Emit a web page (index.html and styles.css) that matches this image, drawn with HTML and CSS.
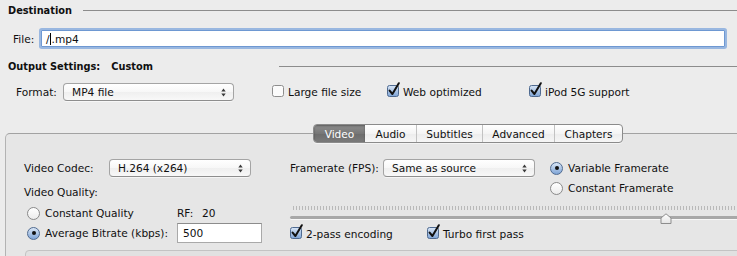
FILE: index.html
```html
<!DOCTYPE html>
<html>
<head>
<meta charset="utf-8">
<link rel="stylesheet" href="styles.css">
</head>
<body>
<div class="page">
  <div class="head-row dest-row">
    <span class="head">Destination</span>
    <span class="rule rule-dest"></span>
  </div>

  <div class="file-row">
    <span class="lbl file-lbl">File:</span>
    <div class="field focus"><span>/</span><span class="caret"></span><span>.mp4</span></div>
  </div>

  <div class="head-row out-row">
    <span class="head">Output Settings:</span>
    <span class="head custom">Custom</span>
    <span class="rule rule-out"></span>
  </div>

  <div class="format-row">
    <span class="lbl format-lbl">Format:</span>
    <div class="popup w-format"><span>MP4 file</span>
      <svg class="arrows" width="5" height="9" viewBox="0 0 5 9"><path d="M0.3 3.6 L2.5 0.6 L4.7 3.6 Z M0.3 5.4 L2.5 8.4 L4.7 5.4 Z" fill="#3a3a3a"/></svg>
    </div>
    <div class="check w-large">
      <svg class="cb" width="14" height="16" viewBox="0 0 14 16"><rect x="0.5" y="3.5" width="11" height="11" rx="2" class="cb-off"/></svg>
      <span>Large file size</span>
    </div>
    <div class="check w-web">
      <svg class="cb" width="14" height="16" viewBox="0 0 14 16"><defs><linearGradient id="g1" x1="0" y1="0" x2="0" y2="1"><stop offset="0" stop-color="#d9e6f6"/><stop offset="1" stop-color="#7ea4d6"/></linearGradient></defs><rect x="0.5" y="3.5" width="11" height="11" rx="2" fill="url(#g1)" stroke="#4f6a90"/><path d="M2.6 8.6 L5.4 12 L11.8 1.2" fill="none" stroke="#111" stroke-width="2" stroke-linecap="round" stroke-linejoin="round"/></svg>
      <span>Web optimized</span>
    </div>
    <div class="check">
      <svg class="cb" width="14" height="16" viewBox="0 0 14 16"><rect x="0.5" y="3.5" width="11" height="11" rx="2" fill="url(#g1)" stroke="#4f6a90"/><path d="M2.6 8.6 L5.4 12 L11.8 1.2" fill="none" stroke="#111" stroke-width="2" stroke-linecap="round" stroke-linejoin="round"/></svg>
      <span>iPod 5G support</span>
    </div>
  </div>

  <div class="tabbox">
    <div class="tabs">
      <span class="tab sel t-video">Video</span>
      <span class="tab t-audio">Audio</span>
      <span class="tab t-subs">Subtitles</span>
      <span class="tab t-adv">Advanced</span>
      <span class="tab t-chap">Chapters</span>
    </div>

    <div class="tab-content">
      <div class="col-left">
        <div class="row codec-row">
          <span class="lbl codec-lbl">Video Codec:</span>
          <div class="popup w-codec"><span>H.264 (x264)</span>
            <svg class="arrows" width="5" height="9" viewBox="0 0 5 9"><path d="M0.3 3.6 L2.5 0.6 L4.7 3.6 Z M0.3 5.4 L2.5 8.4 L4.7 5.4 Z" fill="#3a3a3a"/></svg>
          </div>
        </div>
        <div class="quality-lbl">Video Quality:</div>
        <div class="row cq-row">
          <div class="radio w-cq"><span class="rb"></span><span>Constant Quality</span></div>
          <span class="rf">RF:</span><span class="rf-val">20</span>
        </div>
        <div class="row ab-row">
          <div class="radio w-cq"><span class="rb on"></span><span>Average Bitrate (kbps):</span></div>
          <div class="field plain"><span>500</span></div>
        </div>
      </div>

      <div class="col-right">
        <div class="row fr-row">
          <span class="lbl fr-lbl">Framerate (FPS):</span>
          <div class="popup w-fr"><span>Same as source</span>
            <svg class="arrows" width="5" height="9" viewBox="0 0 5 9"><path d="M0.3 3.6 L2.5 0.6 L4.7 3.6 Z M0.3 5.4 L2.5 8.4 L4.7 5.4 Z" fill="#3a3a3a"/></svg>
          </div>
          <div class="radio-group">
            <div class="radio"><span class="rb on"></span><span>Variable Framerate</span></div>
            <div class="radio"><span class="rb"></span><span>Constant Framerate</span></div>
          </div>
        </div>
        <div class="slider">
          <div class="ticks"></div>
          <div class="track"></div>
          <svg class="knob" width="12" height="11" viewBox="0 0 12 11"><defs><linearGradient id="kg" x1="0" y1="0" x2="0" y2="1"><stop offset="0" stop-color="#ffffff"/><stop offset="1" stop-color="#e4e4e4"/></linearGradient></defs><path d="M1 10.5 L1 5 L6 0.8 L11 5 L11 10.5 Z" fill="url(#kg)" stroke="#8d8d8d" stroke-linejoin="round"/></svg>
        </div>
        <div class="row pass-row">
          <div class="check w-pass">
            <svg class="cb" width="14" height="16" viewBox="0 0 14 16"><rect x="0.5" y="3.5" width="11" height="11" rx="2" fill="url(#g1)" stroke="#4f6a90"/><path d="M2.6 8.6 L5.4 12 L11.8 1.2" fill="none" stroke="#111" stroke-width="2" stroke-linecap="round" stroke-linejoin="round"/></svg>
            <span>2-pass encoding</span>
          </div>
          <div class="check">
            <svg class="cb" width="14" height="16" viewBox="0 0 14 16"><rect x="0.5" y="3.5" width="11" height="11" rx="2" fill="url(#g1)" stroke="#4f6a90"/><path d="M2.6 8.6 L5.4 12 L11.8 1.2" fill="none" stroke="#111" stroke-width="2" stroke-linecap="round" stroke-linejoin="round"/></svg>
            <span>Turbo first pass</span>
          </div>
        </div>
      </div>
    </div>

    <div class="subbox"></div>
  </div>
</div>
</body>
</html>
```

FILE: styles.css
```css
* { box-sizing: border-box; }
html, body {
  margin: 0;
  padding: 0;
  background: #ececec;
}
body {
  width: 737px;
  height: 256px;
  overflow: hidden;
  font-family: "DejaVu Sans", "Liberation Sans", sans-serif;
  font-size: 10.6px;
  color: #101010;
}
.page {
  width: 737px;
  height: 256px;
  overflow: hidden;
}

/* section headings */
.head-row {
  display: flex;
  align-items: center;
  height: 20px;
  padding-left: 8px;
}
.head {
  font-weight: bold;
  font-size: 9.8px;
  white-space: nowrap;
}
.custom { margin-left: 11px; }
.rule {
  flex: 1;
  height: 1px;
  background: #8c8c8c;
}
.rule-dest { margin-left: 11px; }
.rule-out { flex: none; width: 458px; margin-left: auto; }

/* file row */
.file-row {
  display: flex;
  align-items: center;
  margin-top: 9px;
  padding-left: 13px;
  height: 19px;
}
.file-lbl { width: 28px; }
.field {
  display: flex;
  align-items: center;
  background: #fff;
  height: 17px;
  padding-left: 4px;
}
.focus {
  width: 684px;
  border: 1px solid #6e98d2;
  border-radius: 1px;
  box-shadow: 0 0 0 2px rgba(125, 165, 220, 0.75);
}
.caret {
  width: 1px;
  height: 12px;
  background: #000;
  margin: 0 0.5px;
}
.out-row { margin-top: 8px; }

/* format row */
.format-row {
  display: flex;
  align-items: center;
  margin-top: 7px;
  padding-left: 16px;
  height: 18px;
}
.format-lbl { width: 47px; }
.popup {
  display: flex;
  align-items: center;
  justify-content: space-between;
  height: 18px;
  padding: 0 7px 0 8px;
  border: 1px solid #a4a4a4;
  border-bottom-color: #8e8e8e;
  border-radius: 4px;
  background: linear-gradient(#ffffff, #f7f7f7 50%, #efefef 51%, #f8f8f8);
  box-shadow: 0 1px 0 rgba(255, 255, 255, 0.6);
  white-space: nowrap;
}
.arrows { flex: none; }
.w-format { width: 171px; margin-right: 38px; }
.check {
  display: flex;
  align-items: center;
  white-space: nowrap;
}
.cb { flex: none; margin-top: -4px; margin-right: 2px; }
.cb-off {
  fill: #fbfbfb;
  stroke: #8e8e8e;
}
.w-large { width: 115px; }
.w-web { width: 142px; }

/* tab box */
.tabbox {
  margin-top: 32px;
  margin-left: 5px;
  width: 780px;
  height: 140px;
  border: 1px solid #b3b3b3;
  border-top-color: #a2a2a2;
  border-radius: 5px;
  background: #e6e6e6;
}
.tabs {
  display: flex;
  margin-top: -10px;
  margin-left: 307px;
  width: 310px;
  height: 19px;
  border: 1px solid #8b8b8b;
  border-radius: 4px;
  overflow: hidden;
  background: linear-gradient(#ffffff, #f4f4f4 50%, #ececec 51%, #f6f6f6);
  box-shadow: 0 1px 0 rgba(255, 255, 255, 0.5);
}
.tab {
  display: flex;
  align-items: center;
  justify-content: center;
  height: 100%;
  border-left: 1px solid #c2c2c2;
  white-space: nowrap;
}
.tab:first-child { border-left: none; }
.sel {
  background: linear-gradient(#8e8e8e, #777777 50%, #6c6c6c 51%, #7a7a7a);
  color: #fff;
  box-shadow: inset 0 1px 2px rgba(0, 0, 0, 0.35);
}
.sel + .tab { border-left: none; }
.t-video { width: 51px; }
.t-audio { width: 51px; }
.t-subs { width: 66px; }
.t-adv { width: 72px; }
.t-chap { flex: 1; }

.tab-content {
  display: flex;
  margin-top: 16px;
  padding-left: 18px;
}
.col-left { width: 266px; }
.row {
  display: flex;
  align-items: center;
}
.codec-row { height: 18px; }
.codec-lbl { width: 85px; }
.w-codec { width: 142px; }
.quality-lbl {
  height: 14px;
  line-height: 14px;
  margin-top: 8px;
}
.cq-row { height: 14px; margin-top: 7px; }
.radio {
  display: flex;
  align-items: center;
  white-space: nowrap;
  height: 14px;
}
.w-cq { width: 153px; padding-left: 3px; }
.rb {
  flex: none;
  width: 13px;
  height: 13px;
  border-radius: 50%;
  border: 1px solid #8a8a8a;
  background: linear-gradient(#ffffff, #ececec);
  margin-right: 5px;
  display: flex;
  align-items: center;
  justify-content: center;
}
.rb.on {
  border-color: #4f6a90;
  background: linear-gradient(#d9e6f6, #7ea4d6);
}
.rb.on::after {
  content: "";
  width: 4px;
  height: 4px;
  border-radius: 50%;
  background: #111;
}
.rf { width: 25px; }
.ab-row { height: 20px; margin-top: 3px; }
.plain {
  width: 85px;
  height: 20px;
  border: 1px solid #a9a9a9;
  border-top-color: #8c8c8c;
  padding-left: 5px;
}

.col-right { flex: 1; }
.fr-row { align-items: flex-start; height: 36px; }
.fr-lbl { width: 93px; height: 18px; line-height: 18px; }
.w-fr { width: 152px; }
.radio-group {
  display: flex;
  flex-direction: column;
  gap: 6px;
  margin-left: 15px;
  margin-top: 2px;
}
.slider {
  position: relative;
  margin-top: 11px;
  height: 18px;
}
.ticks {
  margin-left: 3px;
  margin-top: 2px;
  height: 4px;
  background: repeating-linear-gradient(90deg, #b9b9b9 0, #b9b9b9 1px, transparent 1px, transparent 3px);
}
.track {
  margin-top: 6px;
  height: 3px;
  border-radius: 2px;
  background: #a8a8a8;
  box-shadow: 0 1px 0 rgba(255, 255, 255, 0.7);
}
.knob {
  position: absolute;
  left: 370px;
  top: 7px;
}
.pass-row { height: 14px; margin-top: 3px; }
.w-pass { width: 137px; }

.subbox {
  margin-top: 7px;
  margin-left: 19px;
  height: 30px;
  border: 1px solid #c3c3c3;
  border-radius: 4px;
  background: #e1e1e1;
}
```
